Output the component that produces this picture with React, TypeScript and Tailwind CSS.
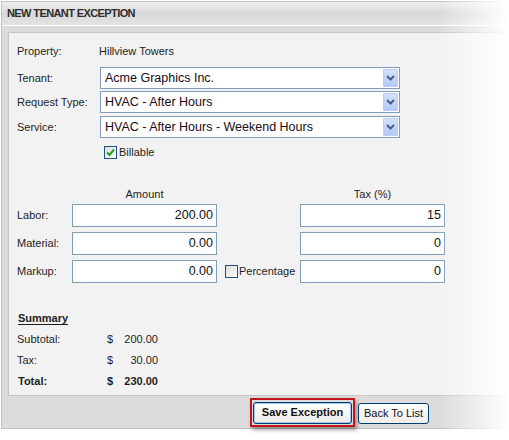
import React from 'react';

const font = "font-['Liberation_Sans',Arial,sans-serif]";

const Chevron = () => (
  <svg width="9" height="6" viewBox="0 0 9 6">
    <path d="M1 1 L4.5 4.5 L8 1" fill="none" stroke="#4d6185" strokeWidth="2" />
  </svg>
);

const Select = ({ value }: { value: string }) => (
  <div className="relative flex h-[22px] w-[300px] items-center border border-[#7f9db9] bg-white pl-[4px] text-[12.5px] text-[#1a0a12]">
    <span>{value}</span>
    <div className="absolute right-[1px] top-[1px] flex h-[18px] w-[15px] items-center justify-center rounded-[1px] border border-[#bccdf7] bg-linear-to-b from-[#d3e0fd] to-[#b5c9fa]">
      <Chevron />
    </div>
  </div>
);

const Checkbox = ({ checked }: { checked?: boolean }) => (
  <div className="flex h-[13px] w-[13px] shrink-0 items-center justify-center border border-[#1c5180] bg-linear-to-br from-[#dcdcd7] to-white">
    {checked && (
      <svg width="9" height="9" viewBox="0 0 9 9">
        <path d="M1 4.5 L3.5 7 L8 1.5" fill="none" stroke="#21a121" strokeWidth="2" />
      </svg>
    )}
  </div>
);

const NumInput = ({ value }: { value: string }) => (
  <div className="flex h-[23px] w-[145px] items-center justify-end border border-[#7f9db9] bg-white pr-[3px] text-[12.5px] text-[#111]">
    {value}
  </div>
);

const amountRows = [
  { label: 'Labor:', amount: '200.00', tax: '15' },
  { label: 'Material:', amount: '0.00', tax: '0' },
  { label: 'Markup:', amount: '0.00', tax: '0', percent: true },
];

const summaryRows = [
  { label: 'Subtotal:', value: '200.00' },
  { label: 'Tax:', value: '30.00' },
];

export default function App() {
  return (
    <div className={`relative h-[440px] w-[509px] overflow-hidden bg-white ${font} text-[11px] text-[#1e1e1e]`}>
      <div className="ml-[1px] mt-[1px] w-[530px] border border-[#c2c2c2] bg-[#dcdcdc]">
        {/* Header */}
        <div className="flex h-[24px] items-center border-b border-white bg-linear-to-b from-[#eeeeee] via-[#d9d9d9] to-[#e3e3e3] pl-[5px] text-[11px] font-bold tracking-[-0.6px] text-[#2d2d2d]">
          NEW TENANT EXCEPTION
        </div>

        <div className="pl-[6px] pt-[6px] pb-[1px]">
          {/* Inner panel */}
          <div className="border border-[#c6c6c6] bg-[#f2f2f2] pl-[8px] pt-[9px] pb-[3px]">
            <div className="flex h-[18px] items-center">
              <span className="w-[83px]">Property:</span>
              <span className="-ml-[1px]">Hillview Towers</span>
            </div>
            <div className="mt-[7px] flex items-center">
              <span className="w-[83px]">Tenant:</span>
              <Select value="Acme Graphics Inc." />
            </div>
            <div className="mt-[2px] flex items-center">
              <span className="w-[83px]">Request Type:</span>
              <Select value="HVAC - After Hours" />
            </div>
            <div className="mt-[3px] flex items-center">
              <span className="w-[83px]">Service:</span>
              <Select value="HVAC - After Hours - Weekend Hours" />
            </div>
            <div className="mt-[5px] flex h-[18px] items-center pl-[87px]">
              <Checkbox checked />
              <span className="ml-[2px]">Billable</span>
            </div>

            {/* Amounts */}
            <div className="mt-[25px] grid grid-cols-[55px_145px_83px_145px]">
              <span />
              <span className="flex h-[16px] items-center justify-center">Amount</span>
              <span />
              <span className="flex h-[16px] items-center justify-center">Tax (%)</span>
            </div>
            <div className="mt-[2px] flex flex-col gap-[5px]">
              {amountRows.map((r) => (
                <div key={r.label} className="grid grid-cols-[55px_145px_83px_145px] items-center">
                  <span>{r.label}</span>
                  <NumInput value={r.amount} />
                  <div className="flex items-center pl-[8px]">
                    {r.percent && (
                      <>
                        <Checkbox />
                        <span className="ml-[1px]">Percentage</span>
                      </>
                    )}
                  </div>
                  <NumInput value={r.tax} />
                </div>
              ))}
            </div>

            {/* Summary */}
            <div className="mt-[25px] flex h-[21px] items-center pl-[1px] font-bold underline underline-offset-2">
              Summary
            </div>
            {summaryRows.map((r) => (
              <div key={r.label} className="flex h-[21px] items-center">
                <span className="w-[90px]">{r.label}</span>
                <span className="w-[12px]">$</span>
                <span className="w-[39px] text-right">{r.value}</span>
              </div>
            ))}
            <div className="flex h-[21px] items-center font-bold">
              <span className="w-[90px] pl-[1px]">Total:</span>
              <span className="w-[12px]">$</span>
              <span className="w-[39px] text-right">230.00</span>
            </div>
          </div>

          {/* Buttons */}
          <div className="mt-[2px] flex items-center pl-[242px]">
            <div className="flex h-[29px] w-[105px] items-center justify-center border-2 border-[#c0141b] shadow-[2px_3px_4px_rgba(0,0,0,0.35)]">
              <button className="flex h-[22px] w-[99px] items-center justify-center rounded-[3px] border border-[#003c74] bg-linear-to-b from-white to-[#ecebe6] text-[11px] font-bold text-[#111] shadow-[inset_0_0_0_1px_#a9c5f2]">
                Save Exception
              </button>
            </div>
            <button className="ml-[3px] mt-[2px] flex h-[21px] w-[71px] items-center justify-center rounded-[3px] border border-[#003c74] bg-linear-to-b from-white to-[#eeede8] text-[11px] text-[#111]">
              Back To List
            </button>
          </div>
        </div>
      </div>

      {/* right edge fade */}
      <div className="pointer-events-none absolute inset-y-0 right-0 w-[70px] bg-linear-to-r from-white/0 to-white" />
    </div>
  );
}
